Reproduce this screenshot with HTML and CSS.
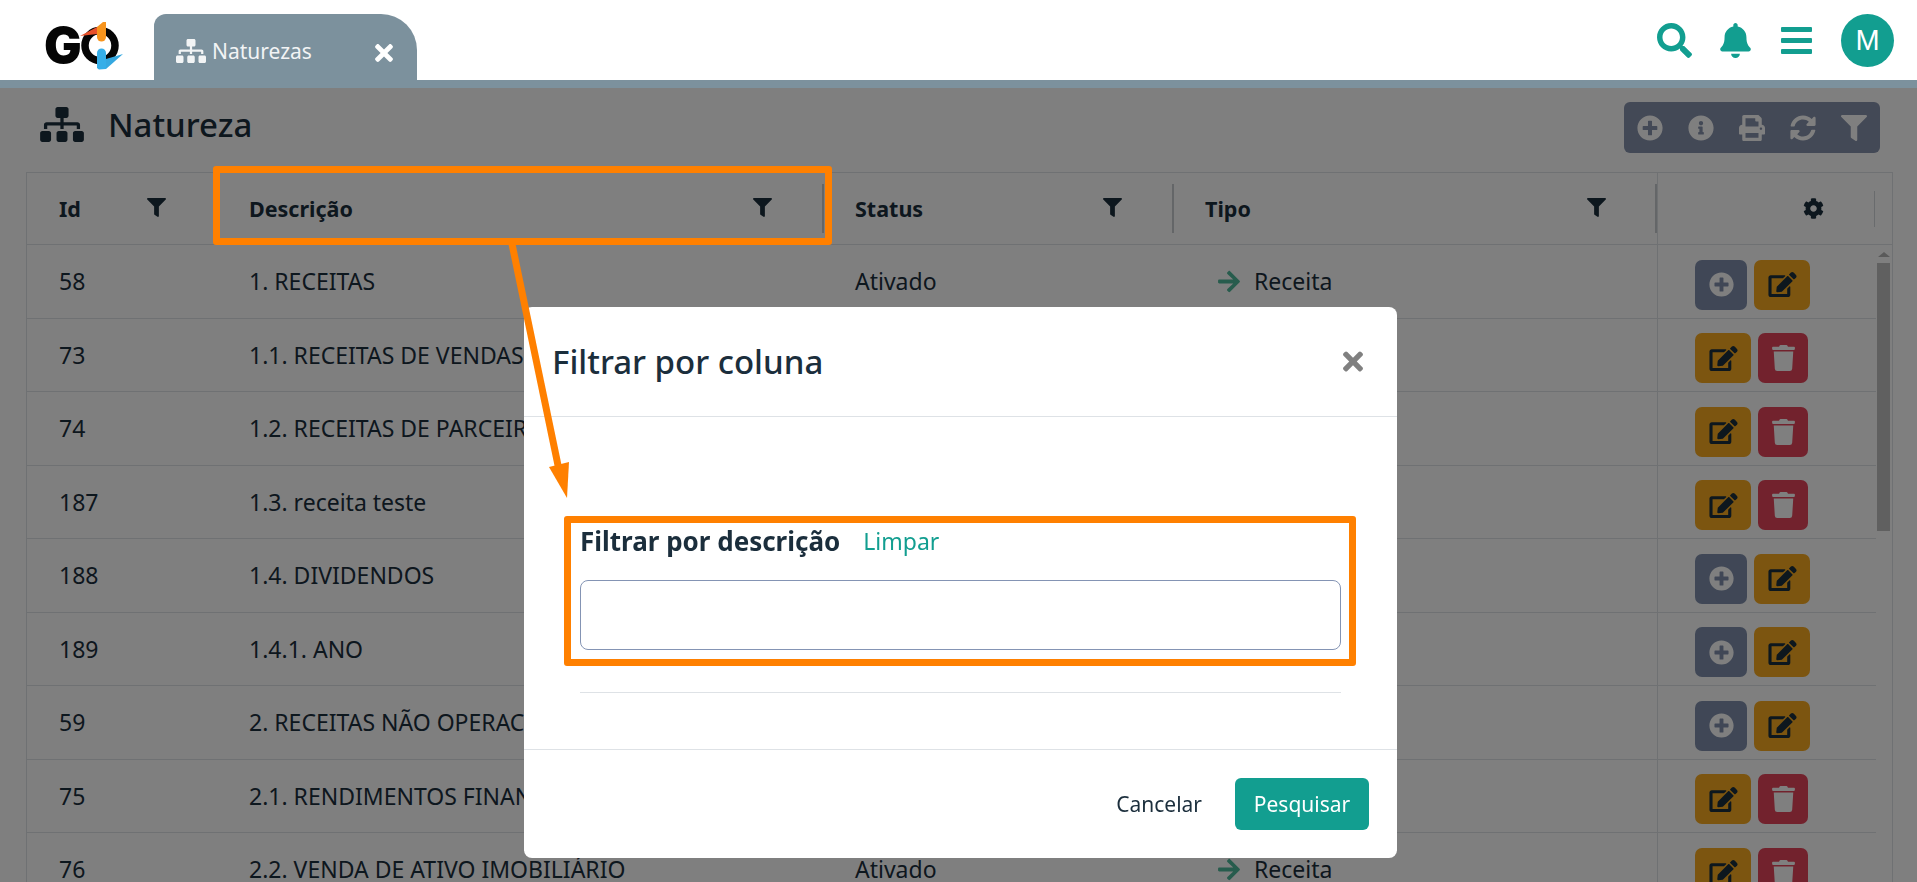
FILE: index.html
```html
<!DOCTYPE html>
<html lang="pt-BR">
<head>
    <meta charset="UTF-8">
    <title>Naturezas</title>
    <link rel="stylesheet" href="styles.css">
</head>
<body>
    <svg class="sprite" xmlns="http://www.w3.org/2000/svg">
        <symbol id="i-sitemap" viewBox="0 0 640 512"><path d="M128 352H32c-17.67 0-32 14.33-32 32v96c0 17.67 14.33 32 32 32h96c17.67 0 32-14.33 32-32v-96c0-17.67-14.33-32-32-32zm-24-80h192v48h48v-48h192v48h48v-57.59c0-21.17-17.23-38.41-38.41-38.41H344v-64h40c17.67 0 32-14.33 32-32V32c0-17.67-14.33-32-32-32H256c-17.67 0-32 14.33-32 32v96c0 17.67 14.33 32 32 32h40v64H94.41C73.23 224 56 241.23 56 262.41V320h48v-48zm264 80h-96c-17.67 0-32 14.33-32 32v96c0 17.67 14.33 32 32 32h96c17.67 0 32-14.33 32-32v-96c0-17.67-14.33-32-32-32zm240 0h-96c-17.67 0-32 14.33-32 32v96c0 17.67 14.33 32 32 32h96c17.67 0 32-14.33 32-32v-96c0-17.67-14.33-32-32-32z"/></symbol>
        <symbol id="i-filter" viewBox="0 0 512 512"><path d="M487.976 0H24.028C2.71 0-8.047 25.866 7.058 40.971L192 225.941V432c0 7.831 3.821 15.17 10.237 19.662l80 55.98C298.02 518.69 320 507.493 320 487.98V225.941l184.947-184.97C520.021 25.896 509.338 0 487.976 0z"/></symbol>
        <symbol id="i-search" viewBox="0 0 512 512"><path d="M505 442.7L405.3 343c-4.5-4.5-10.6-7-17-7H372c27.6-35.3 44-79.7 44-128C416 93.1 322.9 0 208 0S0 93.1 0 208s93.1 208 208 208c48.3 0 92.7-16.4 128-44v16.3c0 6.4 2.5 12.5 7 17l99.7 99.7c9.4 9.4 24.6 9.4 33.9 0l28.3-28.3c9.4-9.4 9.4-24.6.1-34zM208 336c-70.7 0-128-57.2-128-128 0-70.7 57.2-128 128-128 70.7 0 128 57.2 128 128 0 70.7-57.2 128-128 128z"/></symbol>
        <symbol id="i-bell" viewBox="0 0 448 512"><path d="M224 512c35.32 0 63.97-28.65 63.97-64H160.03c0 35.35 28.65 64 63.97 64zm215.39-149.71c-19.32-20.76-55.47-51.99-55.47-154.29 0-77.7-54.48-139.9-127.94-155.16V32c0-17.67-14.32-32-31.98-32s-31.98 14.33-31.98 32v20.84C118.56 68.1 64.08 130.3 64.08 208c0 102.3-36.15 133.53-55.47 154.29-6 6.45-8.66 14.16-8.61 21.71.11 16.4 12.98 32 32.1 32h383.8c19.12 0 32-15.6 32.1-32 .05-7.55-2.61-15.27-8.61-21.71z"/></symbol>
        <symbol id="i-bars" viewBox="0 0 31 27"><rect width="31" height="5" rx="1"/><rect y="11" width="31" height="5" rx="1"/><rect y="22" width="31" height="5" rx="1"/></symbol>
        <symbol id="i-plus" viewBox="0 0 512 512"><path d="M256 8C119 8 8 119 8 256s111 248 248 248 248-111 248-248S393 8 256 8zm144 276c0 6.6-5.4 12-12 12h-92v92c0 6.6-5.4 12-12 12h-56c-6.6 0-12-5.4-12-12v-92h-92c-6.6 0-12-5.4-12-12v-56c0-6.6 5.4-12 12-12h92v-92c0-6.6 5.4-12 12-12h56c6.6 0 12 5.4 12 12v92h92c6.6 0 12 5.4 12 12v56z"/></symbol>
        <symbol id="i-info" viewBox="0 0 512 512"><path d="M256 8C119.043 8 8 119.083 8 256c0 136.997 111.043 248 248 248s248-111.003 248-248C504 119.083 392.957 8 256 8zm0 110c23.196 0 42 18.804 42 42s-18.804 42-42 42-42-18.804-42-42 18.804-42 42-42zm56 254c0 6.627-5.373 12-12 12h-88c-6.627 0-12-5.373-12-12v-24c0-6.627 5.373-12 12-12h12v-64h-12c-6.627 0-12-5.373-12-12v-24c0-6.627 5.373-12 12-12h64c6.627 0 12 5.373 12 12v100h12c6.627 0 12 5.373 12 12v24z"/></symbol>
        <symbol id="i-print" viewBox="0 0 512 512"><path d="M448 192V77.25c0-8.49-3.37-16.62-9.37-22.63L393.37 9.37c-6-6-14.14-9.37-22.63-9.37H96C78.33 0 64 14.33 64 32v160c-35.35 0-64 28.65-64 64v112c0 8.84 7.16 16 16 16h48v96c0 17.67 14.33 32 32 32h320c17.67 0 32-14.33 32-32v-96h48c8.84 0 16-7.16 16-16V256c0-35.35-28.65-64-64-64zm-64 256H128v-96h256v96zm0-224H128V64h192v48c0 8.84 7.16 16 16 16h48v96zm48 72c-13.25 0-24-10.75-24-24 0-13.26 10.75-24 24-24s24 10.74 24 24c0 13.25-10.75 24-24 24z"/></symbol>
        <symbol id="i-sync" viewBox="0 0 512 512"><path d="M370.72 133.28C339.458 104.008 298.888 87.962 255.848 88c-77.458.068-144.328 53.178-162.791 126.85-1.344 5.363-6.122 9.15-11.651 9.15H24.103c-7.498 0-13.194-6.807-11.807-14.176C33.933 94.924 134.813 8 256 8c66.448 0 126.791 26.136 171.315 68.685L463.03 40.97C478.149 25.851 504 36.559 504 57.941V192c0 13.255-10.745 24-24 24H345.941c-21.382 0-32.09-25.851-16.971-40.971l41.75-41.749zM32 296h134.059c21.382 0 32.09 25.851 16.971 40.971l-41.75 41.75c31.262 29.273 71.835 45.319 114.876 45.28 77.418-.07 144.315-53.144 162.787-126.849 1.344-5.363 6.122-9.15 11.651-9.15h57.304c7.498 0 13.194 6.807 11.807 14.176C478.067 417.076 377.187 504 256 504c-66.448 0-126.791-26.136-171.315-68.685L48.97 471.03C33.851 486.149 8 475.441 8 454.059V320c0-13.255 10.745-24 24-24z"/></symbol>
        <symbol id="i-cog" viewBox="0 0 512 512"><path d="M487.4 315.7l-42.6-24.6c4.3-23.2 4.3-47 0-70.2l42.6-24.6c4.9-2.8 7.1-8.6 5.5-14-11.1-35.6-30-67.8-54.7-94.6-3.8-4.1-10-5.1-14.8-2.3L380.8 110c-17.9-15.4-38.5-27.3-60.8-35.1V25.8c0-5.6-3.9-10.5-9.4-11.7-36.7-8.2-74.3-7.8-109.2 0-5.5 1.2-9.4 6.1-9.4 11.7V75c-22.2 7.9-42.8 19.8-60.8 35.1L88.7 85.5c-4.9-2.8-11-1.9-14.8 2.3-24.7 26.7-43.6 58.9-54.7 94.6-1.7 5.4.6 11.2 5.5 14L67.3 221c-4.3 23.2-4.3 47 0 70.2l-42.6 24.6c-4.9 2.8-7.1 8.6-5.5 14 11.1 35.6 30 67.8 54.7 94.6 3.8 4.1 10 5.1 14.8 2.3l42.6-24.6c17.9 15.4 38.5 27.3 60.8 35.1v49.2c0 5.6 3.9 10.5 9.4 11.7 36.7 8.2 74.3 7.8 109.2 0 5.5-1.2 9.4-6.1 9.4-11.7v-49.2c22.2-7.9 42.8-19.8 60.8-35.1l42.6 24.6c4.9 2.8 11 1.9 14.8-2.3 24.7-26.7 43.6-58.9 54.7-94.6 1.5-5.5-.7-11.3-5.6-14.1zM256 336c-44.1 0-80-35.9-80-80s35.9-80 80-80 80 35.9 80 80-35.9 80-80 80z"/></symbol>
        <symbol id="i-edit" viewBox="0 0 576 512"><path d="M402.6 83.2l90.2 90.2c3.8 3.8 3.8 10 0 13.8L274.4 405.6l-92.8 10.3c-12.4 1.4-22.9-9.1-21.5-21.5l10.3-92.8L388.8 83.2c3.8-3.8 10-3.8 13.8 0zm162-22.9l-48.8-48.8c-15.2-15.2-39.9-15.2-55.2 0l-35.4 35.4c-3.8 3.8-3.8 10 0 13.8l90.2 90.2c3.8 3.8 10 3.8 13.8 0l35.4-35.4c15.2-15.3 15.2-40 0-55.2zM384 346.2V448H64V128h229.8c3.2 0 6.2-1.3 8.5-3.5l40-40c7.6-7.6 2.2-20.5-8.5-20.5H48C21.5 64 0 85.5 0 112v352c0 26.5 21.5 48 48 48h352c26.5 0 48-21.5 48-48V306.2c0-10.7-12.9-16-20.5-8.5l-40 40c-2.2 2.3-3.5 5.3-3.5 8.5z"/></symbol>
        <symbol id="i-trash" viewBox="0 0 448 512"><path d="M432 32H312l-9.4-18.7A24 24 0 0 0 281.1 0H166.8a23.72 23.72 0 0 0-21.4 13.3L136 32H16A16 16 0 0 0 0 48v32a16 16 0 0 0 16 16h416a16 16 0 0 0 16-16V48a16 16 0 0 0-16-16zM53.2 467a48 48 0 0 0 47.9 45h245.8a48 48 0 0 0 47.9-45L416 128H32z"/></symbol>
        <symbol id="i-arrow" viewBox="0 0 448 512"><path d="M190.5 66.9l22.2-22.2c9.4-9.4 24.6-9.4 33.9 0L441 239c9.4 9.4 9.4 24.6 0 33.9L246.6 467.3c-9.4 9.4-24.6 9.4-33.9 0l-22.2-22.2c-9.5-9.5-9.3-25 .4-34.3L311.4 296H24c-13.3 0-24-10.7-24-24v-32c0-13.3 10.7-24 24-24h287.4L190.9 101.2c-9.8-9.3-10-24.8-.4-34.3z"/></symbol>
        <symbol id="i-times" viewBox="0 0 352 512"><path d="M242.72 256l100.07-100.07c12.28-12.28 12.28-32.19 0-44.48l-22.24-22.24c-12.28-12.28-32.19-12.28-44.48 0L176 189.28 75.93 89.21c-12.28-12.28-32.19-12.28-44.48 0L9.21 111.45c-12.28 12.28-12.28 32.19 0 44.48L109.28 256 9.21 356.07c-12.28 12.28-12.28 32.19 0 44.48l22.24 22.24c12.28 12.28 32.2 12.28 44.48 0L176 322.72l100.07 100.07c12.28 12.28 32.2 12.28 44.48 0l22.24-22.24c12.28-12.28 12.28-32.19 0-44.48L242.72 256z"/></symbol>
    </svg>

    <header class="topbar">
        <div class="logo">
            <svg class="logo-mark" width="90" height="52" viewBox="0 0 90 52">
                <text class="logo-g" x="-1" y="41">G</text>
                <circle cx="55" cy="23.500" r="15" fill="none" stroke="#050505" stroke-width="7.500"/>
                <path d="M35 14l17-9v7z" fill="#e8502a"/>
                <path d="M61 47l17-15-17 5z" fill="#35a8e0"/>
                <path d="M52 5l6-5h3v15a4.500 4.500 0 0 1-9 0z" fill="#f7941d"/>
                <path d="M52 31a4.500 4.500 0 0 1 9 0v16l-7 0.500a3 3 0 0 1-2-2z" fill="#35aee8"/>
            </svg>
        </div>
        <div class="tab">
            <svg class="tab-icon"><use href="#i-sitemap"/></svg>
            <span class="tab-label">Naturezas</span>
            <svg class="tab-close"><use href="#i-times"/></svg>
        </div>
        <div class="topbar-actions">
            <svg class="nav-search"><use href="#i-search"/></svg>
            <svg class="nav-bell"><use href="#i-bell"/></svg>
            <svg class="nav-bars"><use href="#i-bars"/></svg>
            <div class="avatar">M</div>
        </div>
    </header>

    <main class="page">
        <div class="page-head">
            <svg class="page-icon"><use href="#i-sitemap"/></svg>
            <h1>Natureza</h1>
            <div class="toolbar">
                <span class="tool"><svg><use href="#i-plus"/></svg></span>
                <span class="tool"><svg><use href="#i-info"/></svg></span>
                <span class="tool"><svg><use href="#i-print"/></svg></span>
                <span class="tool"><svg><use href="#i-sync"/></svg></span>
                <span class="tool"><svg><use href="#i-filter"/></svg></span>
            </div>
        </div>

        <div class="table">
            <div class="thead">
                <div class="th">Id<svg class="th-filter"><use href="#i-filter"/></svg></div>
                <div class="th">Descrição<svg class="th-filter"><use href="#i-filter"/></svg></div>
                <div class="th th-divided">Status<svg class="th-filter"><use href="#i-filter"/></svg></div>
                <div class="th th-divided">Tipo<svg class="th-filter"><use href="#i-filter"/></svg></div>
                <div class="th th-actions th-divided"><svg class="th-cog"><use href="#i-cog"/></svg></div>
            </div>
            <div class="tbody">
                <div class="rows">
                    <div class="tr">
                        <div class="td">58</div><div class="td">1. RECEITAS</div><div class="td">Ativado</div>
                        <div class="td td-tipo"><svg class="tipo-icon"><use href="#i-arrow"/></svg>Receita</div>
                        <div class="td td-actions"><span class="btn btn-add"><svg><use href="#i-plus"/></svg></span><span class="btn btn-edit"><svg><use href="#i-edit"/></svg></span></div>
                    </div>
                    <div class="tr">
                        <div class="td">73</div><div class="td">1.1. RECEITAS DE VENDAS</div><div class="td">Ativado</div>
                        <div class="td td-tipo"><svg class="tipo-icon"><use href="#i-arrow"/></svg>Receita</div>
                        <div class="td td-actions"><span class="btn btn-edit"><svg><use href="#i-edit"/></svg></span><span class="btn btn-del"><svg><use href="#i-trash"/></svg></span></div>
                    </div>
                    <div class="tr">
                        <div class="td">74</div><div class="td">1.2. RECEITAS DE PARCEIROS</div><div class="td">Ativado</div>
                        <div class="td td-tipo"><svg class="tipo-icon"><use href="#i-arrow"/></svg>Receita</div>
                        <div class="td td-actions"><span class="btn btn-edit"><svg><use href="#i-edit"/></svg></span><span class="btn btn-del"><svg><use href="#i-trash"/></svg></span></div>
                    </div>
                    <div class="tr">
                        <div class="td">187</div><div class="td">1.3. receita teste</div><div class="td">Ativado</div>
                        <div class="td td-tipo"><svg class="tipo-icon"><use href="#i-arrow"/></svg>Receita</div>
                        <div class="td td-actions"><span class="btn btn-edit"><svg><use href="#i-edit"/></svg></span><span class="btn btn-del"><svg><use href="#i-trash"/></svg></span></div>
                    </div>
                    <div class="tr">
                        <div class="td">188</div><div class="td">1.4. DIVIDENDOS</div><div class="td">Ativado</div>
                        <div class="td td-tipo"><svg class="tipo-icon"><use href="#i-arrow"/></svg>Receita</div>
                        <div class="td td-actions"><span class="btn btn-add"><svg><use href="#i-plus"/></svg></span><span class="btn btn-edit"><svg><use href="#i-edit"/></svg></span></div>
                    </div>
                    <div class="tr">
                        <div class="td">189</div><div class="td">1.4.1. ANO</div><div class="td">Ativado</div>
                        <div class="td td-tipo"><svg class="tipo-icon"><use href="#i-arrow"/></svg>Receita</div>
                        <div class="td td-actions"><span class="btn btn-add"><svg><use href="#i-plus"/></svg></span><span class="btn btn-edit"><svg><use href="#i-edit"/></svg></span></div>
                    </div>
                    <div class="tr">
                        <div class="td">59</div><div class="td">2. RECEITAS NÃO OPERACIONAIS</div><div class="td">Ativado</div>
                        <div class="td td-tipo"><svg class="tipo-icon"><use href="#i-arrow"/></svg>Receita</div>
                        <div class="td td-actions"><span class="btn btn-add"><svg><use href="#i-plus"/></svg></span><span class="btn btn-edit"><svg><use href="#i-edit"/></svg></span></div>
                    </div>
                    <div class="tr">
                        <div class="td">75</div><div class="td">2.1. RENDIMENTOS FINANCEIROS</div><div class="td">Ativado</div>
                        <div class="td td-tipo"><svg class="tipo-icon"><use href="#i-arrow"/></svg>Receita</div>
                        <div class="td td-actions"><span class="btn btn-edit"><svg><use href="#i-edit"/></svg></span><span class="btn btn-del"><svg><use href="#i-trash"/></svg></span></div>
                    </div>
                    <div class="tr">
                        <div class="td">76</div><div class="td">2.2. VENDA DE ATIVO IMOBILIÁRIO</div><div class="td">Ativado</div>
                        <div class="td td-tipo"><svg class="tipo-icon"><use href="#i-arrow"/></svg>Receita</div>
                        <div class="td td-actions"><span class="btn btn-edit"><svg><use href="#i-edit"/></svg></span><span class="btn btn-del"><svg><use href="#i-trash"/></svg></span></div>
                    </div>
                </div>
                <div class="scrollbar">
                    <span class="scroll-arrow"></span>
                    <span class="scroll-thumb"></span>
                </div>
            </div>
        </div>
    </main>

    <div class="backdrop"></div>

    <div class="modal">
        <div class="modal-head">
            <h2>Filtrar por coluna</h2>
            <svg class="modal-close"><use href="#i-times"/></svg>
        </div>
        <div class="modal-body">
            <div class="field-label">
                <strong>Filtrar por descrição</strong>
                <span class="link">Limpar</span>
            </div>
            <div class="input"></div>
            <div class="rule"></div>
        </div>
        <div class="modal-foot">
            <span class="btn-cancel">Cancelar</span>
            <span class="btn-search">Pesquisar</span>
        </div>
    </div>

    <!-- marcacoes laranja do tutorial -->
    <div class="mark mark-column"></div>
    <div class="mark mark-field"></div>
    <svg class="mark-arrow" width="1917" height="882">
        <line x1="512" y1="244" x2="559" y2="470" stroke="#ff8000" stroke-width="7"/>
        <path d="M549 467l20-5-2 36z" fill="#ff8000"/>
    </svg>
</body>
</html>
```

FILE: styles.css
```css
* {
    box-sizing: border-box;
}
html, body {
    height: 100%;
}
body {
    margin: 0;
    overflow: hidden;
    background: #fff;
    color: #1b2e3c;
    font-family: "Noto Sans", sans-serif;
    font-size: 23px;
}
svg {
    display: block;
    fill: currentColor;
}
.sprite {
    display: none;
}

/* barra superior */
.topbar {
    position: relative;
    z-index: 3;
    display: flex;
    align-items: flex-end;
    height: 88px;
    background: #fff;
    border-bottom: 8px solid #7c919d;
}
.logo {
    width: 154px;
    height: 80px;
    padding: 22px 0 0 45px;
}
.logo-mark {
    overflow: visible;
}
.logo-g {
    font-family: Inter, sans-serif;
    font-size: 50px;
    font-weight: 900;
    fill: #050505;
}
.tab {
    display: flex;
    align-items: center;
    width: 263px;
    height: 74px;
    margin-bottom: -8px;
    padding: 0 24px 0 22px;
    background: #7c919d;
    border-radius: 12px 36px 0 0;
    color: #f2f4f5;
}
.tab-icon {
    width: 30px;
    height: 24px;
}
.tab-label {
    margin-left: 6px;
    font-size: 21px;
}
.tab-close {
    width: 18px;
    height: 26px;
    margin: 4px 0 0 auto;
    color: #fff;
}
.topbar-actions {
    display: flex;
    align-items: center;
    height: 80px;
    margin-left: auto;
    padding-right: 23px;
    color: #129e90;
}
.nav-search {
    width: 35px;
    height: 35px;
}
.nav-bell {
    width: 31px;
    height: 35px;
    margin-left: 28px;
}
.nav-bars {
    width: 31px;
    height: 27px;
    margin-left: 30px;
}
.avatar {
    display: flex;
    align-items: center;
    justify-content: center;
    width: 53px;
    height: 53px;
    margin-left: 29px;
    border-radius: 50%;
    background: #129e90;
    color: #fff;
    font-family: "Liberation Sans", sans-serif;
    font-size: 29px;
}

/* titulo */
.page {
    padding: 14px 24px 0 26px;
}
.page-head {
    display: flex;
    align-items: center;
    height: 51px;
    margin-bottom: 19px;
}
.page-icon {
    width: 44px;
    height: 35px;
    margin: -6px 0 0 14px;
}
.page-head h1 {
    margin: -6px 0 0 24px;
    font-size: 33px;
    font-weight: 500;
}
.toolbar {
    display: flex;
    width: 256px;
    height: 51px;
    margin-left: auto;
    margin-right: 13px;
    background: #8692ac;
    border-radius: 6px;
    color: #fff;
}
.tool {
    display: flex;
    flex: 1;
    align-items: center;
    justify-content: center;
}
.tool svg {
    width: 26px;
    height: 26px;
}

/* tabela */
.table {
    border: 1px solid #dee2e6;
    border-bottom: 0;
}
.thead {
    display: grid;
    grid-template-columns: 190px 606px 350px 484px 1fr;
    height: 72px;
    border-bottom: 1px solid #dee2e6;
}
.th {
    position: relative;
    display: flex;
    align-items: center;
    justify-content: space-between;
    padding: 0 51px 0 32px;
    font-size: 21.500px;
    font-weight: 700;
}
.th-divided::before {
    content: "";
    position: absolute;
    left: -1px;
    top: 11px;
    bottom: 11px;
    width: 2px;
    background: #c9ccd0;
}
.th-actions {
    justify-content: flex-start;
    padding: 0 0 0 145px;
    border-left: 1px solid #dee2e6;
}
.th-actions::before {
    left: -3px;
}
.th-actions::after {
    content: "";
    position: absolute;
    right: 17px;
    top: 18px;
    bottom: 17px;
    width: 1px;
    background: #d3d6da;
}
.th-filter {
    width: 19px;
    height: 19px;
    margin-top: -2px;
}
.th-cog {
    width: 21px;
    height: 21px;
}
.tbody {
    display: flex;
}
.rows {
    flex: 1;
}
.tr {
    display: grid;
    grid-template-columns: 190px 606px 350px 484px 1fr;
    height: 73.500px;
    border-bottom: 1px solid #dee2e6;
}
.td {
    display: flex;
    align-items: center;
    padding-left: 32px;
    white-space: nowrap;
}
.td-tipo {
    padding-left: 45px;
}
.tipo-icon {
    width: 22px;
    height: 25px;
    margin-right: 14px;
    color: #4fb89a;
}
.td-actions {
    gap: 7px;
    padding: 7px 0 0 37px;
    border-left: 1px solid #dee2e6;
}
.btn {
    display: flex;
    align-items: center;
    justify-content: center;
    height: 50px;
    border-radius: 7px;
}
.btn-add {
    width: 52px;
    background: #808fac;
    color: #fff;
}
.btn-add svg {
    width: 25px;
    height: 25px;
}
.btn-edit {
    width: 56px;
    background: #f8aa20;
    color: #1b2e3c;
}
.btn-edit svg {
    width: 29px;
    height: 25px;
}
.btn-del {
    width: 50px;
    background: #e4445a;
    color: #fff;
}
.btn-del svg {
    width: 23px;
    height: 26px;
}
.scrollbar {
    display: flex;
    flex-direction: column;
    align-items: center;
    width: 16px;
    padding-right: 1px;
}
.scroll-arrow {
    margin-top: 7px;
    border: 4px solid transparent;
    border-top: 0;
    border-left-width: 6px;
    border-right-width: 6px;
    border-bottom: 5px solid #b4b4b4;
}
.scroll-thumb {
    width: 13px;
    height: 268px;
    margin-top: 6px;
    background: #c1c1c1;
}

/* modal */
.backdrop {
    position: fixed;
    inset: 88px 0 0 0;
    z-index: 1;
    background: rgba(0, 0, 0, 0.5);
}
.modal {
    position: fixed;
    left: 524px;
    top: 307px;
    z-index: 2;
    display: flex;
    flex-direction: column;
    width: 873px;
    height: 551px;
    background: #fff;
    border-radius: 8px;
}
.modal-head {
    display: flex;
    align-items: center;
    justify-content: space-between;
    height: 110px;
    padding: 0 34px 0 28px;
    border-bottom: 1px solid #dee2e6;
}
.modal-head h2 {
    margin: 0;
    font-size: 33px;
    font-weight: 500;
}
.modal-close {
    width: 20px;
    height: 29px;
    color: #808080;
}
.modal-body {
    height: 333px;
    padding: 106px 56px 0;
    border-bottom: 1px solid #dee2e6;
}
.field-label {
    display: flex;
    align-items: center;
    gap: 23px;
    height: 36px;
}
.field-label strong {
    font-size: 26px;
}
.link {
    color: #129e90;
}
.input {
    height: 70px;
    margin-top: 21px;
    border: 1px solid #8494b4;
    border-radius: 8px;
}
.rule {
    height: 1px;
    margin-top: 42px;
    background: #dee2e6;
}
.modal-foot {
    display: flex;
    flex: 1;
    align-items: center;
    justify-content: flex-end;
    gap: 33px;
    padding: 0 28px;
    font-size: 21px;
}
.btn-search {
    display: flex;
    align-items: center;
    justify-content: center;
    width: 134px;
    height: 52px;
    border-radius: 6px;
    background: #129e90;
    color: #fff;
}

/* marcacoes */
.mark {
    position: fixed;
    z-index: 4;
    border: 7px solid #ff8000;
    border-radius: 3px;
}
.mark-column {
    left: 213px;
    top: 166px;
    width: 619px;
    height: 79px;
}
.mark-field {
    left: 564px;
    top: 516px;
    width: 792px;
    height: 150px;
}
.mark-arrow {
    position: fixed;
    left: 0;
    top: 0;
    z-index: 4;
    pointer-events: none;
}
```
